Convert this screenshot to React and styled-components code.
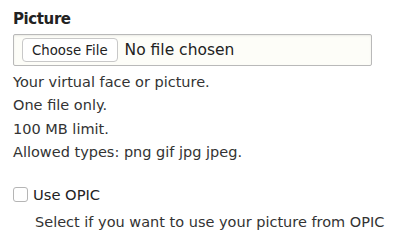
import React from 'react';
import styled, { createGlobalStyle } from 'styled-components';

const GlobalStyle = createGlobalStyle`
  html, body {
    margin: 0;
    padding: 0;
    background: #ffffff;
  }
  body {
    font-family: "DejaVu Sans", "Noto Sans", sans-serif;
    color: #333;
  }
`;

const Form = styled.div`
  width: 400px;
  height: 240px;
  padding: 8px 13px 0;
  box-sizing: border-box;
  overflow: hidden;
`;

const Label = styled.div`
  font-size: 15px;
  font-weight: bold;
  letter-spacing: -0.4px;
  color: #222;
  line-height: 22px;
  margin-bottom: 4px;
`;

const FileBox = styled.div`
  display: flex;
  align-items: center;
  gap: 7px;
  width: 359px;
  height: 32px;
  box-sizing: border-box;
  padding: 0 8px;
  background: #fdfdf8;
  border: 1px solid #b9b9b9;
  border-radius: 2px;
  box-shadow: inset 0 1px 2px rgba(0, 0, 0, 0.08);
`;

const ChooseButton = styled.span`
  display: inline-flex;
  align-items: center;
  height: 22px;
  padding: 0 9px;
  background: #fff;
  border: 1px solid #c8c8c8;
  border-radius: 4px;
  font-size: 13.3px;
  color: #222;
`;

const FileName = styled.span`
  font-size: 15.5px;
  color: #222;
`;

const Help = styled.div`
  margin-top: 5px;
  font-size: 14.5px;
  line-height: 23.4px;
  color: #333;
`;

const CheckRow = styled.label`
  display: flex;
  align-items: center;
  gap: 5px;
  margin-top: 21px;
  font-size: 14.7px;
  line-height: 18px;
  color: #222;
`;

const Box = styled.span`
  width: 13px;
  height: 13px;
  border: 1px solid #b5b5b5;
  border-radius: 3px;
  background: #fff;
`;

const CheckHelp = styled.div`
  margin: 9px 0 0 22px;
  font-size: 14.5px;
  line-height: 18px;
  color: #333;
`;

export default function App() {
  return (
    <>
      <GlobalStyle />
      <Form>
        <Label>Picture</Label>
        <FileBox>
          <ChooseButton>Choose File</ChooseButton>
          <FileName>No file chosen</FileName>
        </FileBox>
        <Help>
          Your virtual face or picture.
          <br />
          One file only.
          <br />
          100 MB limit.
          <br />
          Allowed types: png gif jpg jpeg.
        </Help>
        <CheckRow>
          <Box />
          Use OPIC
        </CheckRow>
        <CheckHelp>Select if you want to use your picture from OPIC</CheckHelp>
      </Form>
    </>
  );
}
